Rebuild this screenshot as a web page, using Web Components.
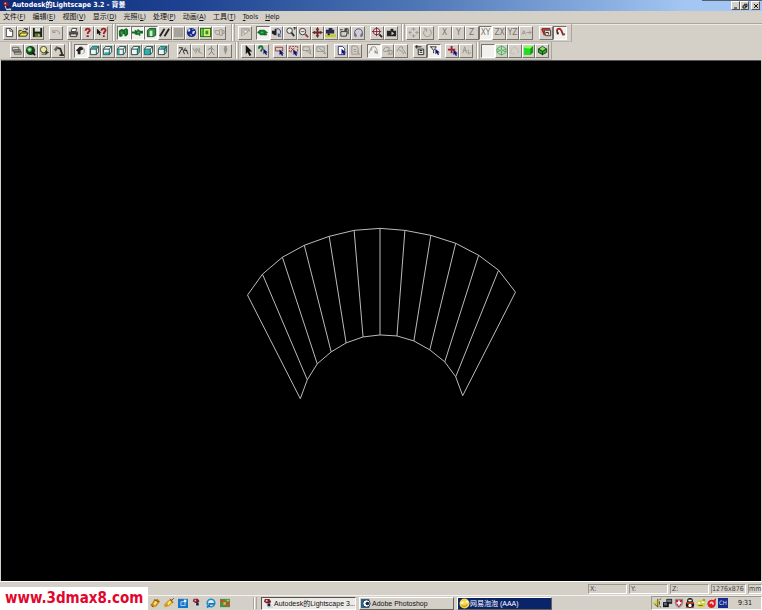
<!DOCTYPE html>
<html lang="zh">
<head>
<meta charset="utf-8">
<title>Autodesk的Lightscape 3.2 - 背景</title>
<style>
html, body { margin: 0; height: 100%; background: #d4d0c8; }
body { font-family: "DejaVu Sans Condensed", "Noto Sans CJK SC", sans-serif; font-size: 7px; color: #111; overflow: hidden; }
</style>
</head>
<body>
<app-window></app-window>
<script>
const box = (top) => `<path d="M1.5 4.5L4 1.5H10.5V7.5L8 10.5H1.5Z" fill="#eef4f2" stroke="#1c4744"/>${top}<path d="M1.5 4.5H8L10.5 1.5M8 4.5V10.5" fill="none" stroke="#1c4744"/>`;
const cyan = (d) => `<path d="${d}" fill="#20b8b4"/>`;
const cursor = (x, y, c = '#10107c') => `<path d="M${x} ${y}v6l1.5-1.3 1.2 2.3 1.3-.7-1.1-2.1h2Z" fill="${c}"/>`;
const G = '#98948c';
const line = (d, c = '#222', w = 1) => `<path d="${d}" fill="none" stroke="${c}" stroke-width="${w}"/>`;
const fill = (d, c) => `<path d="${d}" fill="${c}"/>`;
const lens = (x, y, r, c = '#333') => `<circle cx="${x}" cy="${y}" r="${r}" fill="#e8e8e4" stroke="${c}"/>`;
const letters = (t) => `<text x="6" y="9" text-anchor="middle" font-size="9" fill="#77736c">${t}</text>`;
const ICONS = {
  new: `<path d="M2.5 1.5H7L9.5 4V10.5H2.5Z" fill="#fff" stroke="#333"/>` + line('M6.5 1.5V4.5H9.5', '#333'),
  open: fill('M1 4H4L5 5H9V10H1Z', '#f4ee58') + line('M1 10V4H4L5 5H9V6M1 10L3 6.5H11L9 10Z', '#2c2c10') + line('M6 2.5C7 1 9 1 10 3M10 1V3H8', '#222'),
  save: fill('M1 1H11V11H1Z', '#1c2410') + fill('M3 1H9V5H3Z', '#ddd') + fill('M3 7H9V11H3Z', '#667038') + fill('M7 8H8V10H7Z', '#fff'),
  undo: line('M2 3V6H5M2 6C5 2 10 4 9 8', G),
  print: fill('M1 5H11V9H1Z', '#555') + `<path d="M3.5 5L4.5 1.5H9.5L8.5 5Z" fill="#fff" stroke="#333"/><path d="M2.5 7.5H9.5V10.5H2.5Z" fill="#d8d8c8" stroke="#333"/>`,
  help: line('M4 4C4 1 8.5 1 8.5 3.5C8.5 5 6.2 5 6.2 7.5', '#a71c22', 2) + fill('M5 9H7.4V11H5Z', '#a71c22'),
  what: cursor(1, 2, '#111') + line('M6 4C6 1 10.500 1 10.500 3.500C10.500 5 8.500 5 8.500 7.500', '#a71c22', 2) + fill('M7.500 9H9.500V11H7.500Z', '#a71c22'),
  block: fill('M1 4L4 2L6 3L9 1L11 3V8L9 10H7V8H5V10L2 11L1 9Z', '#146b27') + fill('M3 5H5V8H3ZM8 3H9V7H8Z', '#3fa34a'),
  layer: fill('M0 5H3V3L6 4V2L9 4H12V7H9V10L6 8V9L3 8V7H0Z', '#146b27') + fill('M6 5H8V7H6Z', '#56b45c'),
  cubeg: `<path d="M1.5 3.5L4 1.5H10.5V9L8 10.5H1.5Z" fill="#2b9545" stroke="#114a20"/><path d="M4 4H7V10H4Z" fill="#d8ecd4"/>`,
  slash: line('M1 10L6 2M6 10L11 2', '#222', 2),
  matte: fill('M1 1H11V11H1Z', '#a7a39b'),
  globe: `<circle cx="6" cy="6" r="5" fill="#152686"/>` + fill('M3 2L5 3L4 5L2 5ZM7 5L10 4L9 7L7 8ZM4 8H6V10ZM7 2H8V3H7Z', '#e8ecff'),
  frame: fill('M0 1H12V11H0Z', '#1f6b1f') + fill('M1 2H3V10H1Z', '#6ed13b') + fill('M4 2H11V10H4Z', '#d5f06a') + fill('M6 4H9V8H6Z', '#338b38'),
  cups: line('M1 4H6V8H3L1 6ZM6 3H9V9H6M9 4H11V7H9', G),
  find: line('M2 10V2H10V5', G) + line('M10 3L4 9', G) + lens(6, 5, 2, G),
  orbit: fill('M0 6L3 3H8L12 6L8 9H4Z', '#11752d') + fill('M4 5H7V7H4Z', '#41b75a') + fill('M8 8H11V9H8Z', '#123'),
  turn: fill('M1 4H4V2H6V9H4L1 7Z', '#222') + line('M6 2C11 1 12 7 8 10M8 7V10H11', '#29358a'),
  zoomp: lens(5, 4, 3) + line('M7 6L10 10', '#333', 2) + line('M9 1H12M10.500 0V3', '#333'),
  zoomw: lens(5, 5, 3.5) + line('M8 8L11 11', '#9b3636', 2) + line('M3 5H7', '#8b4b4b'),
  pan: fill('M6 0L8 3H7V5H9V4L12 6L9 8V7H7V9H8L6 12L4 9H5V7H3V8L0 6L3 4V5H5V3H4Z', '#6e2525'),
  dolly: fill('M1 3H4V1H8V3H10V7H1Z', '#29294d') + fill('M0 8H12V11H0Z', '#c6cb2b') + fill('M3 7H5V9H3Z', '#111'),
  tilt: line('M1 3H4M6 2H10V8M2 5V10H8L9 5Z', '#333') + fill('M5 4L8 1L9 4Z', '#333'),
  ring: line('M4 9C0 7 2 2 6 2C10 2 12 7 8 9M2 7V10H4M10 7V10H8', '#343a83'),
  target: `<circle cx="5" cy="5" r="3.5" fill="#eee" stroke="#7b1f2d"/>` + line('M5 0V10M0 5H10', '#7b1f2d') + line('M8 8L11 11', '#222', 2),
  camera: fill('M1 4H5V2H8V4H11V10H1Z', '#222') + fill('M6 5L9 7L6 9Z', '#ccc'),
  move: line('M6 1V4M4 3L6 1L8 3M6 8V11M4 9L6 11L8 9M1 6H4M3 4L1 6L3 8M8 6H11M9 4L11 6L9 8', G),
  rotate: line('M4 3C0 5 2 11 6 10.5C11 10 11 4 8 2.5M5 5V2H2', G),
  x: letters('X'), y: letters('Y'), z: letters('Z'), xy: letters('XY'), zx: letters('ZX'), yz: letters('YZ'),
  ar: line('M1 8L3 4L5 8M2 7H4M6 6H11M9 4L11 6L9 8', G),
  snap: `<path d="M3.500 3.500H10.500V9.500H5Z" fill="#eee2a0" stroke="#342d6c"/>` + line('M1 2H10M1 2L4 9', '#a32525', 2) + line('M5 6H8V8', '#222'),
  magnet: line('M3 7C0 1 6 1 7 4L9 9', '#972a21', 2) + fill('M8 7H11V9H8Z', '#555') + fill('M2 6H4V8H2Z', '#222'),
  stack: `<path d="M1.5 2.5H8.5V6.5H1.5Z M3 5H10V8H3Z M4 7H11V10H4Z" fill="#d7d7cc" stroke="#5a5a55"/>`,
  eye: `<circle cx="6" cy="6" r="5" fill="#143f20"/><circle cx="5" cy="5" r="2.5" fill="#4ac454"/>` + fill('M4 4H6V6H4Z', '#eaffea') + line('M8 8L11 11', '#111', 2),
  bulb: `<circle cx="5" cy="5" r="3.5" fill="#eee9a0" stroke="#44441e"/>` + line('M3 10H8', '#444') + fill('M7 6L11 8L7 11Z', '#39421f'),
  lamp: line('M4 3L8 4L10 10M7 11H12', '#2d2d22', 2) + fill('M1 5L4 1L6 3L3 7Z', '#666658'),
  solid: fill('M1 6L5 2H8L9 5L6 6V10H3V7Z', '#222') + line('M7 2L10 4V8L8 10', '#888'),
  b1: box(cyan('M2 4L4 2H10L8 4Z')), b2: box(cyan('M3 8H8V10H2Z')), b3: box(cyan('M2 5H4V10H2Z')),
  b4: box(cyan('M8 5L10 2V8L8 10Z')), b5: box(cyan('M2 5H8V10H2Z')), b6: box(cyan('M4 2H10V7H8V4H4Z')),
  run: line('M1 3H5L3 6L1 10M5 4L7 10M8 3L7 6H10M9 5L11 10', '#222', 1),
  runw: line('M1 3L3 7L5 3M4 9L6 4L8 9M8 3V7L11 10', G), man: line('M6 1V3M2 5L6 3L9 6M6 4V7L3 11M6 7L9 11', '#777'),
  pin: fill('M5 1H7L8 5L6 11L4 5Z', G), arrow: fill('M3 0V10L5 8L7 12L9 11L7 7H10Z', '#111'),
  pick: line('M2 4C2 0 7 1 6 4L4 7', '#187236', 2) + cursor(7, 4),
  sel1: `<path d="M1.5 2.5H9.5V6.5H1.5Z" fill="none" stroke="#9b3636"/>` + cursor(6, 5),
  sel2: `<path d="M1.5 1.5H10.5V7.5H1.5Z" fill="none" stroke="#9b3636" stroke-dasharray="2 1"/>` + line('M3 3L7 7M7 3L3 7', '#9b3636') + cursor(6, 5),
  gsel: line('M1 2H8V6H1ZM4 6L7 8L10 10M9 5V10', G), gsel2: line('M1 2H9V7H1ZM3 3L8 7L11 10M8 9H11', G),
  doc: `<path d="M2.5 1.5H7L9.5 4V10.5H2.5Z" fill="#fff" stroke="#29297b"/>` + cursor(6, 4), docg: line('M2 1H7L9 4V10H2ZM4 5H7M4 7H7M8 7L11 11', G),
  edge: line('M1 9L4 2H8L10 6V10M4 3V6', G) + fill('M7 5L11 9H7Z', '#9a9a9a'),
  geo1: line('M1 6L4 2L8 3L7 7H2ZM6 6H11V10H6M8 7V10', G), geo2: line('M1 7L4 2H7V5M3 5L8 8V10M8 5L11 10', G),
  list: `<path d="M3.5 4.5H9.5V10.5H3.5Z" fill="#eee" stroke="#222"/>` + line('M0 2H7M2 0V4M5 6H8M5 8H8', '#111'),
  filter: line('M1 2H8L5 6V9M2 2L5 6', '#282828') + cursor(7, 4),
  plus: fill('M4 1H6V4H9V6H6V9H4V6H1V4H4Z', '#a11f28') + cursor(7, 5), aplus: line('M2 9L4 2L6 9M3 6H6M8 5V10L11 8', G),
  blank: '', wire: line('M1 4L6 1L11 4V8L6 11L1 8ZM1 4L6 7L11 4M6 7V11M1 8L6 5L11 8M6 1V5', '#41b854'),
  hidden: line('M2 5L6 2L10 5V9M2 5V9L6 10', '#bebab2'),
  green: fill('M1 3L4 1H11V8L8 11H1Z', '#22dd20') + fill('M1 3L4 1H11L8 4Z', '#8bff55') + fill('M8 4L11 1V8L8 11Z', '#129b1a'),
  green2: `<path d="M1.5 4.5L6 1.5L10.5 4.5V8L6 10.5L1.5 8Z" fill="#35a42b" stroke="#133f12"/>` + line('M1 4L6 7L11 4M6 7V11', '#133f12') + fill('M3 4L6 2L9 4L6 6Z', '#8fe36b'),
  app: fill('M2 1H7L9 4L7 6H4L1 4Z', '#7a1830') + fill('M3 2H5V4H3Z', '#f0b2b2') + line('M4 6L6 10H11', '#ccd8e8', 2) + fill('M5 6H8V9H5Z', '#222'),
  pen: fill('M1 8L5 2L9 1L12 4L8 10L3 11Z', '#c88b14') + fill('M4 7L7 3L9 5L6 9Z', '#ffe36e') + line('M1 8L4 11M5 2L11 5', '#5e471f'),
  pen2: fill('M0 8L5 3L9 1L11 5L6 10L1 11Z', '#d79617') + fill('M4 6L7 3L9 5L5 9Z', '#ffe66e') + line('M7 1L11 6M9 3L12 0', '#5e471f'),
  blue: fill('M0 1H12V12H0Z', '#1675c8') + `<path d="M3.5 4.5H8.5V9H3.5Z" fill="none" stroke="#bfe5ff"/>` + fill('M7 2H10V5H7Z', '#eaffff'),
  ie: `<circle cx="6" cy="6" r="4.5" fill="#d6efff" stroke="#258dc5" stroke-width="2"/>` + line('M3 7H10M1 11L5 9', '#1675b8', 2),
  chart: fill('M0 1H12V11H0Z', '#4b9148') + fill('M1 2H5V5H1ZM7 5H11V10H7Z', '#ca4c2b') + fill('M4 5H7V8H4ZM8 2H11V4H8Z', '#e3ba37'),
  ps: fill('M0 1H9V11H0Z', '#28628a') + `<circle cx="6" cy="6" r="4" fill="#fff" stroke="#153453"/><circle cx="7" cy="6" r="2" fill="#1b2632"/>`,
  bubble: `<circle cx="6" cy="6" r="5.5" fill="#f4d449"/>` + fill('M2 4H5V6H2ZM7 3H10V5H7Z', '#fffbd6') + line('M3 8C5 10 8 9 9 7', '#a87718'),
  sound: fill('M1 5H3L7 1V11L3 7H1Z', '#d6d632') + line('M7 1V11L3 7M9 4V8M9 2L11 1M9 10L11 11', '#403f16'),
  net: fill('M4 1H11V7H4Z', '#222') + fill('M5 2H10V5H5Z', '#697a8b') + fill('M0 5H7V11H0Z', '#111') + fill('M1 6H5V9H1Z', '#53687e'),
  shield: fill('M1 1H11V6C11 9 8 11 6 12C3 11 1 9 1 6Z', '#999') + fill('M2 2H10V6L6 11L2 6Z', '#c12639') + fill('M5 3H7V5H9V7H7V9H5V7H3V5H5Z', '#fff'),
  qq: `<ellipse cx="6" cy="4" rx="3.5" ry="4" fill="#111"/><ellipse cx="6" cy="8" rx="5" ry="4" fill="#151515"/><ellipse cx="6" cy="9" rx="2" ry="2" fill="#fff"/>` + fill('M2 5H10V7H2ZM1 11H5V12H1ZM7 11H11V12H7Z', '#e44815') + fill('M4 2H8V4H4Z', '#fff'),
  face: `<ellipse cx="6" cy="7" rx="5.5" ry="4.5" fill="#d9d13a"/>` + fill('M2 5H5V7H2ZM7 4H10V6H7Z', '#fff') + line('M3 9H8', '#665c1c') + fill('M8 1H11V4H8Z', '#87a93a'),
  red: `<circle cx="5.5" cy="7" r="5" fill="#d91e26"/>` + fill('M6 4L11 0L10 6Z', '#d91e26') + line('M4 7C4 4 8 5 7 8', '#ffd7ce', 2),
  min: fill('M2 9H8V11H2Z', '#111'), restore: `<path d="M4 2.5H10V7H8M2 5.5H7.5V10H2Z" fill="none" stroke="#111" stroke-width="2"/>`, close: line('M2 2L10 10M10 2L2 10', '#111', 2)
};

const define = (name, css, html) => customElements.define(name, class extends HTMLElement {
  connectedCallback() {
    if (this.shadowRoot) return;
    this.attachShadow({ mode: 'open' }).innerHTML = `<style>*{box-sizing:border-box}${css}</style>${html(this)}`;
  }
});

define('ui-icon', `:host{display:block;width:11px;height:11px;flex:none}svg{display:block;width:100%;height:100%;overflow:visible}`,
  (e) => `<svg viewBox="0 0 12 12" aria-hidden="true">${ICONS[e.getAttribute('name')]}</svg>`);

define('tool-button', `:host{display:block;flex:1;min-width:0}
button{width:100%;height:14px;padding:0;border:1px solid;border-color:#fff #77736c #77736c #fff;background:#d4d0c8;display:grid;place-items:center;font:inherit}
:host([on]) button{border-color:#77736c #fff #fff #77736c;background:#f3f1ed}`,
  (e) => `<button aria-label="${e.getAttribute('name')}"><ui-icon name="${e.getAttribute('name')}"></ui-icon></button>`);

define('tool-group', `:host{display:flex;flex:none}`, (e) => e.getAttribute('icons').split(' ')
  .map((n) => `<tool-button name="${n.replace('*', '')}"${n.endsWith('*') ? ' on' : ''}></tool-button>`).join(''));

define('tool-grip', `:host{display:block;flex:none;width:4px;height:17px;border-left:1px solid #aaa69e;border-right:1px solid #aaa69e;box-shadow:inset 1px 0 #fff}`, () => '');

// A row is a list of [gap before, width, icon names]; 'grip' entries draw a band divider.
const ROWS = [
  [[3, 41, 'new open save'], [5, 14, 'undo'], [4, 41, 'print help what'], [4, 'grip'], [1, 109, 'block* layer* cubeg* slash matte globe frame cups'],
   [5, 'grip'], [3, 14, 'find'], [4, 109, 'orbit* turn zoomp zoomw pan dolly tilt ring'], [5, 28, 'target camera'], [3, 'grip'],
   [1, 28, 'move rotate'], [4, 95, 'x y z xy* zx yz ar'], [6, 28, 'snap magnet*'], [4, 'end']],
  [[10, 55, 'stack eye bulb lamp'], [3, 'grip'], [2, 95, 'solid* b1 b2 b3 b4 b5 b6'], [8, 55, 'run runw man pin'], [3, 'grip'],
   [2, 28, 'arrow pick'], [4, 55, 'sel1 sel2 gsel gsel2'], [6, 28, 'doc docg'], [5, 41, 'edge* geo1 geo2'], [5, 28, 'list filter*'],
   [4, 28, 'plus aplus'], [3, 'grip'], [1, 68, 'blank* wire hidden green green2'], [2, 'end']]
];
define('tool-row', `:host{display:flex;align-items:center;align-self:flex-start;height:18px;border-bottom:1px solid #bab6ae}.end{width:1px;height:17px;background:#aaa69e}`,
  (e) => ROWS[e.getAttribute('row')].map(([g, w, n]) =>
    w === 'grip' ? `<tool-grip style="margin-left:${g}px"></tool-grip>`
    : w === 'end' ? `<span class="end" style="margin-left:${g}px"></span>`
    : `<tool-group style="margin-left:${g}px;width:${w}px" icons="${n}"></tool-group>`).join(''));

define('title-bar', `:host{display:flex;align-items:center;height:11px;padding:0 2px;background:linear-gradient(#55606e,#55606e) top right/60px 1px no-repeat,linear-gradient(90deg,#0d2b77,#1e4392 25%,#4f77b6 55%,#a3c6f2 90%);color:#fff;font-weight:700;font-size:7px}
h1{font:inherit;margin:0 auto 0 0;line-height:11px;white-space:nowrap}
ui-icon{width:10px;height:10px}button{width:9px;height:9px;padding:0;border:1px solid;border-color:#fff #555 #555 #fff;background:#d4d0c8;display:grid;place-items:center}
button ui-icon{width:6px;height:6px}button:last-child{margin-left:2px}`,
  () => `<ui-icon name="app"></ui-icon><h1><slot></slot></h1>` + ['min', 'restore', 'close'].map((n) => `<button aria-label="${n}"><ui-icon name="${n}"></ui-icon></button>`).join(''));

define('menu-bar', `:host{display:flex;gap:7px;height:13px;padding:0 3px;border-bottom:1px solid #aaa69e;box-shadow:0 1px #eceae5}
button{border:0;padding:1px 0 0;background:none;font:inherit;line-height:11px;color:inherit;white-space:nowrap}`,
  () => ['文件(<u>F</u>)', '编辑(<u>E</u>)', '视图(<u>V</u>)', '显示(<u>D</u>)', '光照(<u>L</u>)', '处理(<u>P</u>)', '动画(<u>A</u>)', '工具(<u>T</u>)', '<u>T</u>ools', '<u>H</u>elp'].map((t) => `<button>${t}</button>`).join(''));

const OUTER = [[247, 294], [262, 273], [282, 256], [304, 244], [329, 235], [354, 229], [380, 227], [405, 229], [431, 234], [456, 242], [479, 254], [499, 269], [516, 291]];
const INNER = [[300, 398], [307, 379], [317, 363], [331, 351], [346, 342], [363, 336], [380, 334], [397, 335], [414, 340], [430, 349], [445, 361], [456, 376], [463, 395]];
define('model-view', `:host{display:block;flex:1;min-height:0;margin:0 1px;background:#000;border-top:1px solid #555}svg{display:block;width:100%;height:100%}`,
  () => `<svg viewBox="1 59 760 522" role="img" aria-label="fan"><g fill="none" stroke="#bcbcbc"><path d="M${OUTER.join('L')}"/><path d="M${INNER.join('L')}"/><path d="${OUTER.map((p, i) => `M${p}L${INNER[i]}`).join('')}"/></g></svg>`);

define('status-bar', `:host{display:flex;justify-content:flex-end;gap:2px;height:14px;padding-top:2px;border-top:1px solid #fff;color:#444}
span{width:39px;height:10px;line-height:9px;padding-left:1px;border:1px solid;border-color:#9b978f #fff #fff #9b978f;white-space:nowrap}.size{width:35px;padding:0}.unit{width:14px;padding:0}`,
  () => `<span>X:</span><span>Y:</span><span>Z:</span><span class="size">1276x876</span><span class="unit">mm</span>`);

define('task-button', `:host{display:block;width:95px}button{display:flex;align-items:center;width:100%;height:13px;padding:0 1px;border:1px solid;border-color:#fff #66625c #66625c #fff;background:#d4d0c8;color:#111;font:7px "Liberation Sans","Noto Sans CJK SC",sans-serif;white-space:nowrap;overflow:hidden}
:host([active]) button{border-color:#55514c #fff #fff #55514c;background:#eceae6}:host([alert]) button{background:#0a246a;color:#fff}`,
  (e) => `<button><ui-icon name="${e.getAttribute('icon')}"></ui-icon><slot></slot></button>`);

define('task-bar', `:host{display:flex;align-items:center;height:15px;border-top:1px solid #f4f2ee}
.quick{display:flex;gap:4px;margin-left:150px;width:103px}.quick ui-icon{width:10px;height:10px}tool-grip{height:12px;margin-right:4px}.tasks{display:flex;gap:3px;margin-right:auto}
.tray{display:flex;align-items:center;gap:1px;width:111px;height:14px;border:1px solid;border-color:#9b978f #fff #fff #9b978f}
.tray ui-icon{width:10px;height:10px}b{background:#17298a;color:#dce3ff;font-weight:400;line-height:10px;width:10px;text-align:center;font-size:6px}time{margin:0 auto}`,
  () => `<div class="quick">${['pen', 'pen2', 'blue', 'app', 'ie', 'chart'].map((n) => `<ui-icon name="${n}"></ui-icon>`).join('')}</div><tool-grip></tool-grip>
  <div class="tasks"><task-button active icon="app">Autodesk的Lightscape 3....</task-button><task-button icon="ps">Adobe Photoshop</task-button><task-button alert icon="bubble">网易泡泡 (AAA)</task-button></div>
  <div class="tray">${['sound', 'net', 'shield', 'qq', 'face', 'red'].map((n) => `<ui-icon name="${n}"></ui-icon>`).join('')}<b>CH</b><time>9:31</time></div>`);

define('site-mark', `:host{position:absolute;left:0;bottom:0;background:#fff}a{display:block;padding:0 5px;line-height:23px;font-size:15px;font-weight:700;color:#e2062c;text-decoration:none}`,
  () => `<a href="http://www.3dmax8.com"><slot></slot></a>`);

define('app-window', `:host{display:flex;flex-direction:column;height:100vh;position:relative}`,
  () => `<title-bar>Autodesk的Lightscape 3.2 - 背景</title-bar><menu-bar></menu-bar><tool-row row="0"></tool-row><tool-row row="1"></tool-row><model-view></model-view><status-bar></status-bar><task-bar></task-bar><site-mark>www.3dmax8.com</site-mark>`);
</script>
</body>
</html>
